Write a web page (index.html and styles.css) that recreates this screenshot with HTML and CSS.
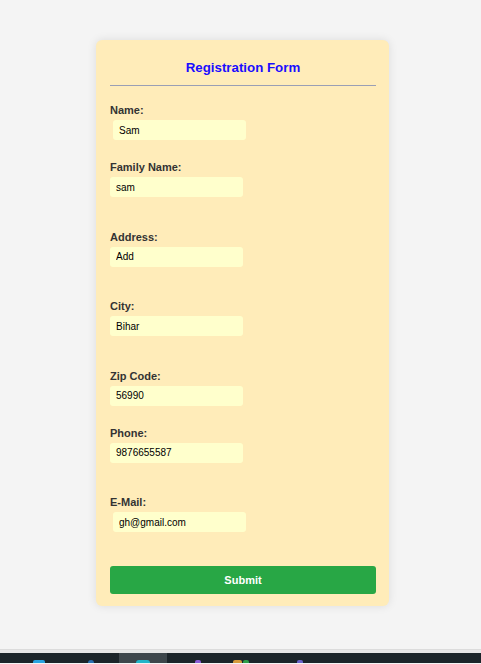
FILE: index.html
```html
<!DOCTYPE html>
<html lang="en">
<head>
<meta charset="utf-8">
<title>Registration Form</title>
<link rel="stylesheet" href="styles.css">
</head>
<body>
<div class="page">
  <form class="card">
    <h2 class="title">Registration Form</h2>
    <hr class="rule">
    <div class="field first">
      <label class="label">Name:</label>
      <input class="input shifted" type="text" value="Sam">
    </div>
    <div class="field near">
      <label class="label">Family Name:</label>
      <input class="input" type="text" value="sam">
    </div>
    <div class="field far">
      <label class="label">Address:</label>
      <input class="input" type="text" value="Add">
    </div>
    <div class="field far">
      <label class="label">City:</label>
      <input class="input" type="text" value="Bihar">
    </div>
    <div class="field far">
      <label class="label">Zip Code:</label>
      <input class="input" type="text" value="56990">
    </div>
    <div class="field near">
      <label class="label">Phone:</label>
      <input class="input" type="text" value="9876655587">
    </div>
    <div class="field far">
      <label class="label">E-Mail:</label>
      <input class="input shifted" type="text" value="gh@gmail.com">
    </div>
    <button class="submit" type="button">Submit</button>
  </form>
</div>
<div class="taskbar">
  <span class="tb-icon tb-blue"></span>
  <span class="tb-icon tb-dot"></span>
  <span class="tb-active"><span class="tb-icon tb-teal"></span></span>
  <span class="tb-icon tb-purple"></span>
  <span class="tb-icon tb-orange"></span>
  <span class="tb-icon tb-green"></span>
  <span class="tb-icon tb-violet"></span>
</div>
</body>
</html>
```
FILE: styles.css
```css
html, body {
  margin: 0;
  padding: 0;
  background: #f4f4f4;
  font-family: "Liberation Sans", Arial, sans-serif;
}
.page {
  height: 650px;
  box-sizing: border-box;
  padding-top: 40px;
  border-bottom: 1px solid #dcdcdc;
  overflow: hidden;
}
.card {
  width: 293px;
  box-sizing: border-box;
  margin-left: 96px;
  padding: 18px 13px 12px 14px;
  background: #ffecb9;
  border-radius: 6px;
  box-shadow: 0 0 10px rgba(0, 0, 0, 0.1);
  display: flex;
  flex-direction: column;
}
.title {
  margin: 0;
  font-size: 13.3px;
  line-height: 20px;
  font-weight: bold;
  text-align: center;
  color: #1a0dff;
}
.rule {
  margin: 7px 0 0;
  height: 0;
  border: 0;
  border-top: 1px solid #9a9fb5;
}
.field {
  display: flex;
  flex-direction: column;
  align-items: flex-start;
}
.field.first { margin-top: 18px; }
.field.near { margin-top: 21px; }
.field.far { margin-top: 33.6px; }
.label {
  font-size: 11px;
  line-height: 13px;
  font-weight: bold;
  color: #333333;
  margin-bottom: 3px;
}
.input {
  width: 133px;
  height: 20px;
  box-sizing: border-box;
  border: 0;
  border-radius: 3px;
  background: #ffffcc;
  padding: 0 6px;
  font-family: "Liberation Sans", Arial, sans-serif;
  font-size: 10px;
  color: #000000;
  outline: none;
}
.input.shifted { margin-left: 3px; }
.submit {
  margin-top: 34px;
  height: 28px;
  border: 0;
  border-radius: 3px;
  background: #28a745;
  color: #ffffff;
  font-family: "Liberation Sans", Arial, sans-serif;
  font-size: 11px;
  font-weight: bold;
}
.taskbar {
  height: 13px;
  background: #1b2429;
  border-top: 3px solid #e6e6e6;
  box-sizing: border-box;
  display: flex;
  align-items: flex-end;
  position: relative;
  overflow: hidden;
}
.tb-icon {
  display: block;
  height: 3px;
  border-radius: 2px 2px 0 0;
}
.tb-blue { width: 12px; margin-left: 33px; background: #2aa3e0; }
.tb-dot { width: 6px; margin-left: 43px; background: #2a6fb0; border-radius: 3px 3px 0 0; }
.tb-active {
  width: 48px;
  height: 10px;
  margin-left: 25px;
  background: #3d464b;
  display: flex;
  justify-content: center;
  align-items: flex-end;
}
.tb-teal { width: 14px; background: #21b5c9; border-radius: 7px 7px 0 0; }
.tb-purple { width: 6px; margin-left: 28px; background: #8b5cd6; }
.tb-orange { width: 9px; margin-left: 32px; background: #d69a3c; }
.tb-green { width: 6px; margin-left: 1px; background: #2f9e4a; }
.tb-violet { width: 6px; margin-left: 48px; background: #6a62c9; }
```
